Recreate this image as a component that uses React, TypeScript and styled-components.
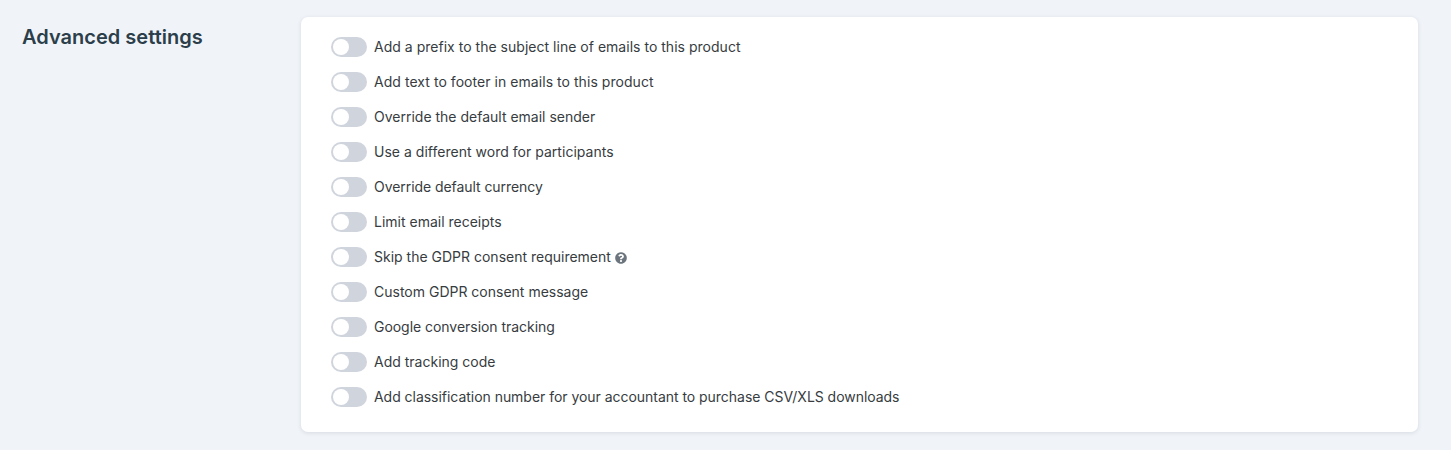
import React from "react";
import styled, { createGlobalStyle } from "styled-components";
import { FaQuestionCircle } from "react-icons/fa";

const GlobalStyle = createGlobalStyle`
  * { box-sizing: border-box; }
  body { margin: 0; background: #f0f4f9; color: #373c41; font-family: Inter, sans-serif; }
`;

const Page = styled.main`
  display: flex;
  align-items: flex-start;
  min-height: 450px;
  padding: 17px 33px 18px 22px;
`;

const Heading = styled.h2`
  flex: 0 0 279px;
  margin: 5px 0 0;
  color: #2c3e4a;
  font-size: 20px;
  line-height: 30px;
  font-weight: 620;
  letter-spacing: 0.02px;
`;

const Card = styled.section`
  flex: 1;
  height: 415px;
  padding: 20px 30px;
  background: #fff;
  border-radius: 7px;
  box-shadow: 0 1px 4px rgba(31, 45, 61, 0.12);
`;

const Row = styled.label`
  display: flex;
  align-items: center;
  height: 20px;
  margin-bottom: 15px;
  font-size: 14px;
  line-height: 20px;
`;

const Toggle = styled.span`
  display: flex;
  align-items: center;
  width: 36px;
  height: 20px;
  margin-right: 7px;
  padding: 2px;
  border-radius: 10px;
  background: #d0d4dd;
`;

const Knob = styled.span`
  width: 16px;
  height: 16px;
  border-radius: 50%;
  background: #fff;
`;

const Label = styled.span<{ $tracking?: number }>`
  letter-spacing: ${({ $tracking = 0 }) => $tracking}px;
`;

const Help = styled(FaQuestionCircle)`
  width: 12px;
  height: 12px;
  margin: 1px 0 0 4px;
  color: #6c757d;
`;

const settings: { label: string; help?: boolean; tracking?: number }[] = [
  { label: "Add a prefix to the subject line of emails to this product", tracking: 0.02 },
  { label: "Add text to footer in emails to this product", tracking: 0.05 },
  { label: "Override the default email sender" },
  { label: "Use a different word for participants", tracking: 0.02 },
  { label: "Override default currency", tracking: -0.06 },
  { label: "Limit email receipts" },
  { label: "Skip the GDPR consent requirement", help: true },
  { label: "Custom GDPR consent message" },
  { label: "Google conversion tracking", tracking: -0.04 },
  { label: "Add tracking code" },
  { label: "Add classification number for your accountant to purchase CSV/XLS downloads", tracking: -0.035 },
];

export default function App() {
  return (
    <Page>
      <GlobalStyle />
      <Heading>Advanced settings</Heading>
      <Card>
        {settings.map(({ label, help, tracking }) => (
          <Row key={label}>
            <Toggle><Knob /></Toggle>
            <Label $tracking={tracking}>{label}</Label>
            {help && <Help />}
          </Row>
        ))}
      </Card>
    </Page>
  );
}
